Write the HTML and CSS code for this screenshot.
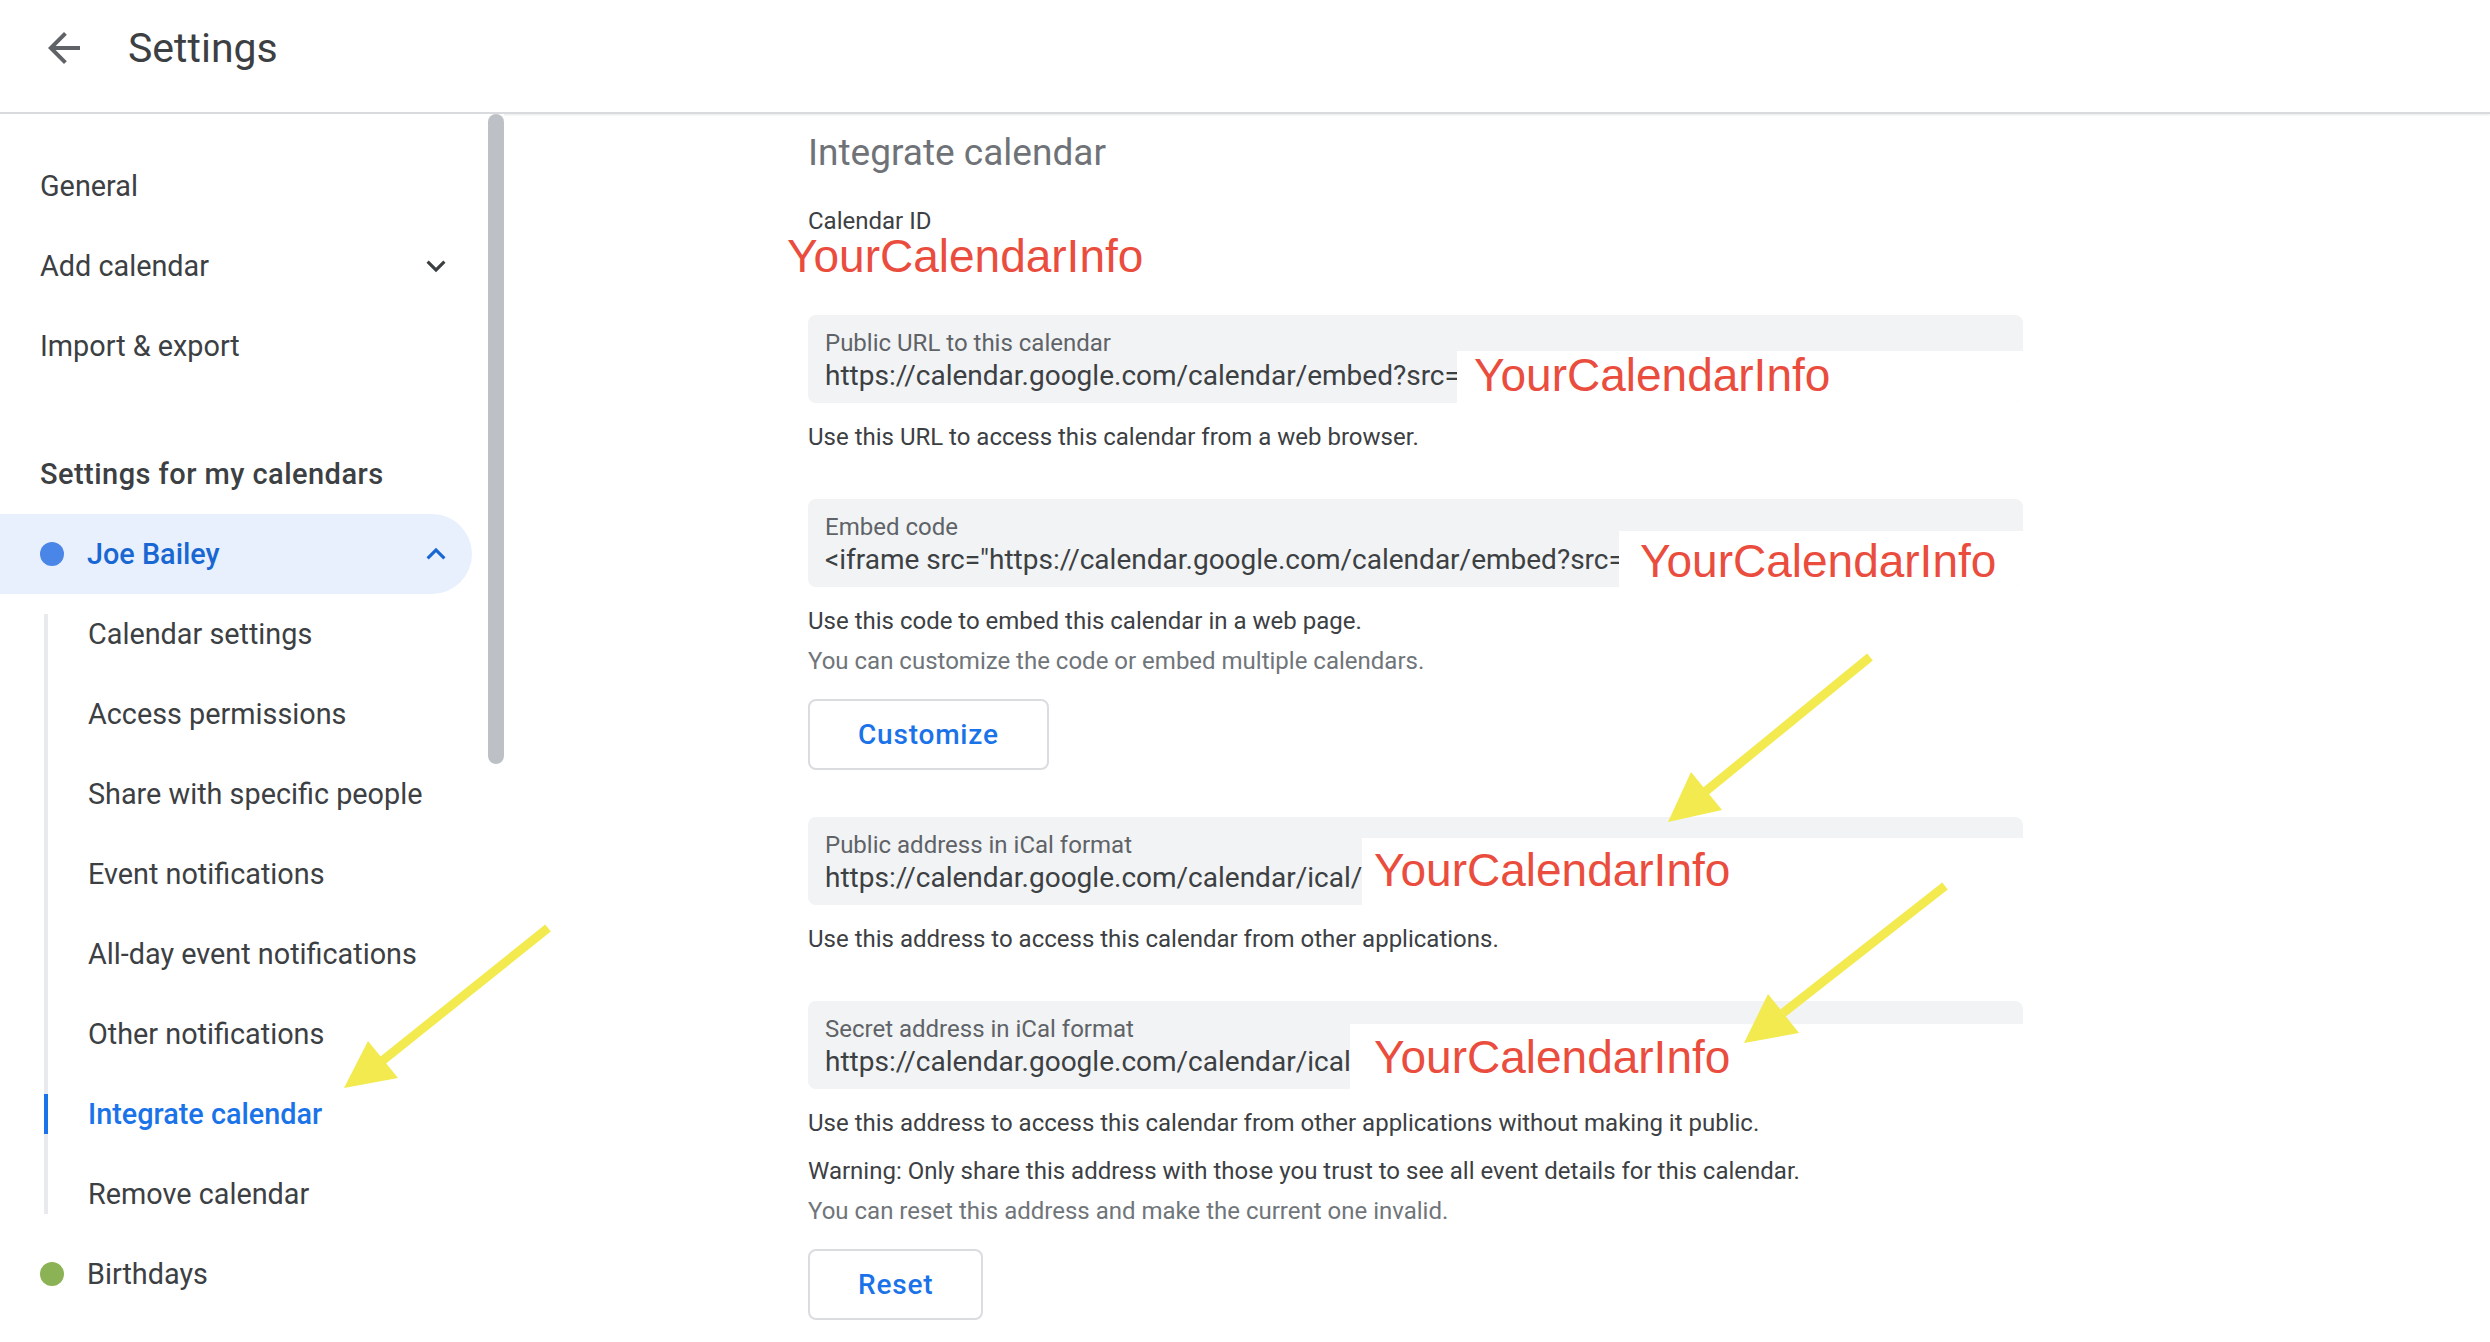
FILE: index.html
```html
<!DOCTYPE html>
<html lang="en">
<head>
  <meta charset="UTF-8">
  <meta name="viewport" content="width=device-width, initial-scale=1.0">
  <title>Settings</title>
  <link rel="stylesheet" href="styles.css">
</head>
<body>
  <div class="page">
    <header class="topbar">
      <button class="back" aria-label="Back">
        <svg viewBox="0 0 24 24" width="48" height="48"><path d="M20 11H7.83l5.59-5.59L12 4l-8 8 8 8 1.41-1.41L7.83 13H20v-2z"/></svg>
      </button>
      <h1>Settings</h1>
    </header>

    <div class="layout">
      <aside class="sidebar">
        <nav class="nav">
          <a class="nav-item">General</a>
          <a class="nav-item">Add calendar
            <svg class="chev" viewBox="0 0 24 24"><path d="M16.59 8.59L12 13.17 7.41 8.59 6 10l6 6 6-6z"/></svg>
          </a>
          <a class="nav-item">Import &amp; export</a>

          <div class="nav-heading">Settings for my calendars</div>
          <a class="nav-item cal-item open"><span class="dot dot-blue"></span>Joe Bailey
            <svg class="chev" viewBox="0 0 24 24"><path d="M12 8l-6 6 1.41 1.41L12 10.83l4.59 4.58L18 14z"/></svg>
          </a>
          <div class="sublist">
            <a class="sub-item">Calendar settings</a>
            <a class="sub-item">Access permissions</a>
            <a class="sub-item">Share with specific people</a>
            <a class="sub-item">Event notifications</a>
            <a class="sub-item">All-day event notifications</a>
            <a class="sub-item">Other notifications</a>
            <a class="sub-item active">Integrate calendar</a>
            <a class="sub-item">Remove calendar</a>
          </div>
          <a class="nav-item cal-item"><span class="dot dot-green"></span>Birthdays</a>
        </nav>
        <div class="scroll-track"><div class="scroll-thumb"></div></div>
      </aside>

      <main class="content">
        <h2 class="section-title">Integrate calendar</h2>

        <div class="plain-label">Calendar ID</div>
        <div class="redact-id">YourCalendarInfo</div>

        <div class="url-box">
          <div class="url-label">Public URL to this calendar</div>
          <div class="url-value">https://calendar.google.com/calendar/embed?src=</div>
          <div class="redact redact-public">YourCalendarInfo</div>
        </div>
        <p class="help">Use this URL to access this calendar from a web browser.</p>

        <div class="url-box">
          <div class="url-label">Embed code</div>
          <div class="url-value">&lt;iframe src="https://calendar.google.com/calendar/embed?src=</div>
          <div class="redact redact-embed">YourCalendarInfo</div>
        </div>
        <p class="help">Use this code to embed this calendar in a web page.</p>
        <p class="help hint">You can customize the code or embed multiple calendars.</p>
        <button class="outline-btn">Customize</button>

        <div class="url-box">
          <div class="url-label">Public address in iCal format</div>
          <div class="url-value">https://calendar.google.com/calendar/ical/</div>
          <div class="redact redact-ical">YourCalendarInfo</div>
        </div>
        <p class="help">Use this address to access this calendar from other applications.</p>

        <div class="url-box">
          <div class="url-label">Secret address in iCal format</div>
          <div class="url-value">https://calendar.google.com/calendar/ical</div>
          <div class="redact redact-secret">YourCalendarInfo</div>
        </div>
        <p class="help">Use this address to access this calendar from other applications without making it public.</p>
        <p class="help warning">Warning: Only share this address with those you trust to see all event details for this calendar.</p>
        <p class="help hint">You can reset this address and make the current one invalid.</p>
        <button class="outline-btn">Reset</button>
      </main>
    </div>

    <!-- yellow annotation arrows pasted over the screenshot -->
    <svg class="annotations" width="2490" height="1342" viewBox="0 0 2490 1342">
      <g class="arrow">
        <line x1="548" y1="928" x2="382" y2="1061"/>
        <polygon points="344,1088 368,1041 398,1078"/>
      </g>
      <g class="arrow">
        <line x1="1870" y1="657" x2="1706" y2="791"/>
        <polygon points="1668,822 1691,772 1722,810"/>
      </g>
      <g class="arrow">
        <line x1="1945" y1="886" x2="1783" y2="1013"/>
        <polygon points="1744,1043 1768,994 1799,1033"/>
      </g>
    </svg>
  </div>
</body>
</html>
```

FILE: styles.css
```css
* {
  box-sizing: border-box;
}
body {
  margin: 0;
  font-family: Roboto, "Liberation Sans", Arial, sans-serif;
  color: #3c4043;
  background: #fff;
}
.page {
  position: relative;
  width: 2490px;
  height: 1342px;
  overflow: hidden;
}

/* top bar */
.topbar {
  position: relative;
  height: 114px;
  padding: 0 0 16px 40px;
  border-bottom: 2px solid #d9dadd;
  box-shadow: 0 1px 2px rgba(60, 64, 67, 0.12);
  display: flex;
  align-items: center;
}
.back {
  width: 48px;
  height: 48px;
  padding: 0;
  margin-right: 40px;
  border: none;
  background: none;
  fill: #5f6368;
}
.topbar h1 {
  margin: 0;
  font-size: 41px;
  font-weight: 400;
  color: #3c4043;
}

.layout {
  display: flex;
}

/* sidebar */
.sidebar {
  position: relative;
  display: flex;
  width: 504px;
  flex-shrink: 0;
  background: #fff;
}
.nav {
  width: 488px;
  padding-top: 32px;
}
.scroll-track {
  width: 16px;
}
.scroll-thumb {
  height: 650px;
  background: #bdc1c6;
  border-radius: 8px;
}
.nav-item {
  height: 80px;
  display: flex;
  align-items: center;
  padding: 0 33px 0 40px;
  font-size: 28.8px;
  color: #3c4043;
  text-decoration: none;
}
.chev {
  width: 38px;
  height: 38px;
  margin-left: auto;
  fill: #3c4043;
}
.nav-heading {
  height: 80px;
  margin-top: 48px;
  display: flex;
  align-items: center;
  padding-left: 40px;
  font-size: 29px;
  font-weight: 500;
  letter-spacing: 0.45px;
}
.cal-item {
  padding-left: 40px;
}
.cal-item.open {
  margin-right: 16px;
  padding-right: 17px;
  background: #e8f0fe;
  border-radius: 0 40px 40px 0;
  color: #1967d2;
  font-weight: 500;
}
.cal-item.open .chev {
  fill: #1967d2;
}
.dot {
  width: 24px;
  height: 24px;
  border-radius: 50%;
  margin-right: 23px;
}
.dot-blue {
  background: #4a86e8;
}
.dot-green {
  background: #8bb254;
}
.sublist {
  position: relative;
}
.sublist::before {
  content: "";
  position: absolute;
  left: 44px;
  top: 20px;
  bottom: 20px;
  width: 4px;
  background: #e8eaed;
}
.sub-item {
  position: relative;
  height: 80px;
  display: flex;
  align-items: center;
  padding-left: 88px;
  font-size: 28.8px;
  color: #3c4043;
}
.sub-item.active {
  color: #1a73e8;
  font-weight: 500;
}
.sub-item.active::before {
  content: "";
  position: absolute;
  left: 44px;
  top: 20px;
  width: 4px;
  height: 40px;
  background: #1a73e8;
}

/* main column */
.content {
  padding: 17px 0 0 304px;
  width: 1519px;
}
.section-title {
  margin: 0;
  font-size: 37px;
  font-weight: 400;
  line-height: 44px;
  color: #6f7378;
}
.plain-label {
  margin-top: 32px;
  font-size: 24px;
  line-height: 28px;
  color: #3c4043;
}
.redact-id,
.redact {
  font-family: "Liberation Sans", Arial, sans-serif;
  font-size: 46px;
  color: #ea4d3d;
  white-space: nowrap;
}
.redact-id {
  margin-left: -21px;
  line-height: 42px;
}
.url-box {
  position: relative;
  width: 1215px;
  height: 88px;
  margin-top: 38px;
  padding: 13px 17px 9px;
  background: #f1f3f4;
  border-radius: 8px;
  overflow: hidden;
}
.url-label {
  font-size: 24px;
  line-height: 30px;
  color: #5f6368;
  white-space: nowrap;
}
.url-value {
  font-size: 28px;
  line-height: 36px;
  color: #3c4043;
  white-space: nowrap;
}
.redact {
  position: absolute;
  right: 0;
  bottom: 0;
  line-height: 48px;
  background: #fff;
}
.redact-public {
  left: 649px;
  top: 36px;
  padding-left: 17px;
}
.redact-embed {
  left: 811px;
  top: 32px;
  padding: 6px 0 0 21px;
}
.redact-ical {
  left: 554px;
  top: 21px;
  padding: 8px 0 0 12px;
}
.redact-secret {
  left: 542px;
  top: 23px;
  padding: 9px 0 0 24px;
}
.help {
  margin: 18px 0 0;
  font-size: 24px;
  line-height: 32px;
  color: #3c4043;
}
.help + .url-box {
  margin-top: 46px;
}
.hint {
  margin-top: 8px;
  color: #70757a;
}
.warning {
  margin-top: 16px;
}
.outline-btn {
  display: block;
  height: 71px;
  margin-top: 22px;
  padding: 0 48px;
  border: 2px solid #dadce0;
  border-radius: 8px;
  background: #fff;
  color: #1a73e8;
  font-family: Roboto, "Liberation Sans", Arial, sans-serif;
  font-size: 28px;
  font-weight: 500;
  letter-spacing: 0.8px;
}
.outline-btn + .url-box {
  margin-top: 47px;
}

/* annotation overlay */
.annotations {
  position: absolute;
  top: 0;
  left: 0;
  pointer-events: none;
}
.arrow line {
  stroke: #f2ea4f;
  stroke-width: 9;
}
.arrow polygon {
  fill: #f2ea4f;
}
```
